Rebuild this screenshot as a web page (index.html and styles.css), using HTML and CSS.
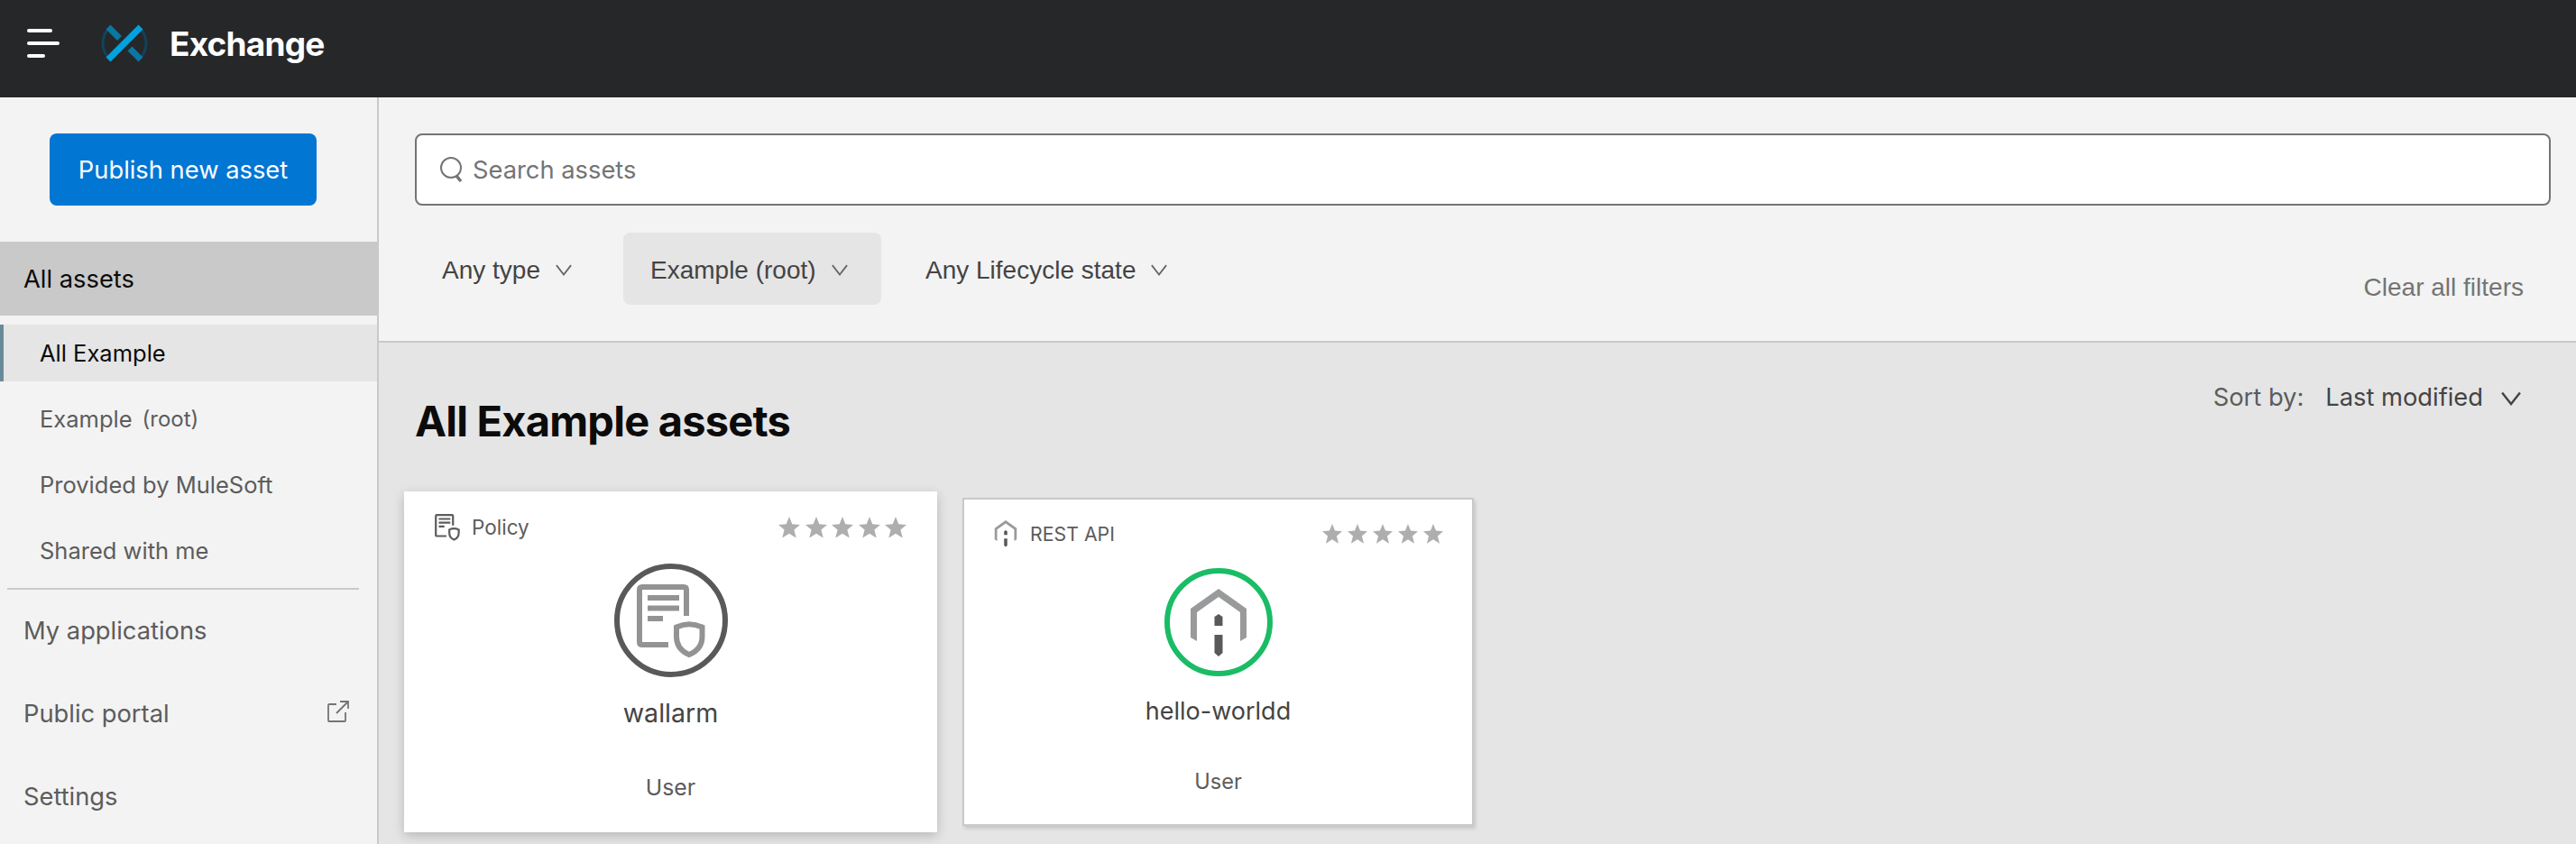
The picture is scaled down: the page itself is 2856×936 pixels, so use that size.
FILE: index.html
```html
<!DOCTYPE html>
<html lang="en">
<head>
<meta charset="utf-8">
<title>Exchange</title>
<link rel="stylesheet" href="styles.css">
</head>
<body>
<svg class="defs" aria-hidden="true">
  <symbol id="chevron" viewBox="0 0 20 14"><path d="M1 1 10 12.5 19 1"/></symbol>
  <symbol id="star" viewBox="0 0 24 24"><path d="M12 0 15.300 8.300 24 8.900 17.400 14.600 19.700 23.600 12 18.800 4.300 23.600 6.600 14.600 0 8.900 8.700 8.300Z"/></symbol>
  <symbol id="policy" viewBox="0 0 76 82"><g fill="none" stroke="currentColor" stroke-width="6"><path d="M35 67H6Q3 67 3 64V6Q3 3 6 3H52Q55 3 55 6V35"/><path d="M12 15H47M12 26.5H47M12 38H29"/><path d="M44 47.500Q58 41 72.500 47.500V58Q72.500 72 58 78Q44 72 44 58Z"/></g></symbol>
  <symbol id="rest" viewBox="0 0 62 76"><path fill="#999a9b" d="M31 0 62 22V54L55 58V26L31 9 7 26V58L0 54V22Z"/><path fill="#58595b" d="M31 28 35.500 31V41H26.500V31ZM26.500 51H35.500V71L31 75 26.500 71Z"/></symbol>
</svg>
<header class="topbar">
  <svg class="menu" viewBox="0 0 36 32"><path d="M2 2H26M2 16H34M2 30H18"/></svg>
  <svg class="logo" viewBox="0 0 52 42"><path d="M7.300 6A24 24 0 0 0 7.300 36M44.700 6A24 24 0 0 1 44.700 36" fill="none" stroke="#12435a" stroke-width="3"/><path d="M8 3 20.500 15.500M32 27 44 39" stroke="#0a76a2" stroke-width="7"/><path d="M8 39 44 3" stroke="#00a2df" stroke-width="7"/></svg>
  <span class="brand">Exchange</span>
</header>
<div class="shell">
  <aside class="side">
    <button class="publish">Publish new asset</button>
    <a class="nav current">All assets</a>
    <div class="sub">
      <a class="subnav selected">All Example</a>
      <a class="subnav"><span>Example</span> <small>(root)</small></a>
      <a class="subnav">Provided by MuleSoft</a>
      <a class="subnav">Shared with me</a>
    </div>
    <a class="nav">My applications</a>
    <a class="nav">Public portal <svg class="external" viewBox="0 0 24 24"><path d="M10 4H2Q1 4 1 5V22Q1 23 2 23H19Q20 23 20 22V13M14 1H23V9M23 1 10 14"/></svg></a>
    <a class="nav">Settings</a>
  </aside>
  <main class="main">
    <section class="filters">
      <div class="search"><svg viewBox="0 0 26 28"><circle cx="12" cy="12" r="11"/><path d="M18 21 23 27" stroke-width="3.500"/></svg><span>Search assets</span></div>
      <div class="filter-row">
        <button class="filter f1"><span>Any type</span><svg><use href="#chevron"/></svg></button>
        <button class="filter f2"><span>Example (root)</span><svg><use href="#chevron"/></svg></button>
        <button class="filter f3"><span>Any Lifecycle state</span><svg><use href="#chevron"/></svg></button>
        <a class="clear">Clear all filters</a>
      </div>
    </section>
    <section class="results">
      <div class="head">
        <h1>All Example assets</h1>
        <div class="sort"><span class="sort-label">Sort by:</span><span class="sort-value">Last modified</span><svg><use href="#chevron"/></svg></div>
      </div>
      <div class="cards">
        <article class="card raised">
          <div class="card-top"><svg class="kind"><use href="#policy"/></svg><span class="type">Policy</span><span class="stars"><svg><use href="#star"/></svg><svg><use href="#star"/></svg><svg><use href="#star"/></svg><svg><use href="#star"/></svg><svg><use href="#star"/></svg></span></div>
          <div class="badge gray"><svg class="big-policy"><use href="#policy"/></svg></div>
          <div class="name">wallarm</div>
          <div class="owner">User</div>
        </article>
        <article class="card">
          <div class="card-top"><svg class="kind"><use href="#rest"/></svg><span class="type">REST API</span><span class="stars"><svg><use href="#star"/></svg><svg><use href="#star"/></svg><svg><use href="#star"/></svg><svg><use href="#star"/></svg><svg><use href="#star"/></svg></span></div>
          <div class="badge green"><svg class="big-rest"><use href="#rest"/></svg></div>
          <div class="name">hello-worldd</div>
          <div class="owner">User</div>
        </article>
      </div>
    </section>
  </main>
</div>
</body>
</html>
```
FILE: styles.css
```css
* { box-sizing: border-box; }
body { margin: 0; height: 936px; overflow: hidden; display: flex; flex-direction: column; background: #f3f3f3; font: 27.3px/36px Inter, "Liberation Sans", sans-serif; color: #5c5c5c; }
button { border: 0; background: none; font: inherit; color: inherit; margin: 0; }
svg { display: block; flex: none; }
.defs { width: 0; height: 0; position: absolute; }
.topbar { height: 108px; flex: none; background: #262729; display: flex; align-items: flex-start; padding-left: 30px; }
.menu { width: 36px; height: 32px; margin-top: 32px; stroke: #fff; stroke-width: 4; stroke-linecap: round; }
.logo { width: 52px; height: 42px; margin: 27px 0 0 46px; }
.brand { margin: 27px 0 0 24px; color: #fff; font-weight: 700; font-size: 37px; line-height: 44px; letter-spacing: -.8px; }
.shell { flex: 1; min-height: 0; display: flex; }
.side { width: 420px; flex: none; border-right: 2px solid #c9c9c9; display: flex; flex-direction: column; padding-top: 40px; }
.publish { width: 296px; height: 80px; flex: none; margin: 0 0 40px 55px; background: #0176d3; color: #fff; border-radius: 8px; padding: 1px 0 0; }
.nav { height: 92px; flex: none; padding: 0 31px 1px 26px; display: flex; align-items: center; justify-content: space-between; }
.nav.current { height: 82px; margin-right: -2px; padding: 1px 31px 0 26px; background: #c9c9c9; color: #0b0b0b; }
.sub { padding: 10px 0 0; display: flex; flex-direction: column; gap: 10px; font-size: 25.5px; }
.sub::after { content: ""; height: 2px; background: #c9c9c9; margin: 0 20px 0 8px; }
.subnav { height: 63px; padding: 1px 0 0 44px; display: flex; align-items: center; gap: 11px; }
.subnav small { font-size: 24px; }
.selected { background: #e5e5e5; border-left: 4px solid #6b8a99; padding-left: 40px; color: #0b0b0b; }
.external { width: 24px; height: 24px; margin-top: -6px; fill: none; stroke: #747474; stroke-width: 1.8; }
.main { flex: 1; display: flex; flex-direction: column; min-width: 0; }
.filters { height: 272px; flex: none; border-bottom: 2px solid #c9c9c9; padding: 40px 28px 0 40px; }
.search { height: 80px; border: 2px solid #747474; border-radius: 8px; background: #fff; display: flex; align-items: center; gap: 10px; padding-left: 26px; color: #747474; }
.search svg { width: 26px; height: 28px; fill: none; stroke: #747474; stroke-width: 2; }
.search span { padding-top: 1px; }
.filter-row { display: flex; align-items: flex-start; margin-top: 30px; font: 28px/36px "Liberation Sans", Arial, sans-serif; }
.filter { height: 80px; border-radius: 8px; display: flex; align-items: center; padding: 2px 0 0 30px; color: #444; }
.filter span { padding-top: 1px; }
.filter svg { width: 18px; height: 13px; margin-left: 17px; fill: none; stroke: #666; stroke-width: 2; }
.f1 { width: 231px; }
.f2 { width: 286px; background: #e5e5e5; }
.f3 { padding-left: 49px; }
.clear { margin: 43px 30px 0 auto; color: #747474; }
.results { flex: 1; background: #e5e5e5; padding: 42px 60px 0 26px; }
.head { display: flex; justify-content: space-between; height: 123px; }
h1 { margin: 17px 0 0 14px; font-size: 47px; line-height: 56px; font-weight: 700; letter-spacing: -.78px; color: #0b0b0b; }
.sort { display: flex; align-items: center; height: 38px; }
.sort-value { color: #444; margin-left: 24px; }
.sort svg { width: 22px; height: 16px; margin: 2px 1px 0 20px; fill: none; stroke: #444; stroke-width: 2.2; }
.cards { display: flex; align-items: flex-start; gap: 28px; }
.card { width: 567px; height: 364px; flex: none; margin-top: 7px; padding: 23px 32px 0 32px; background: #fff; border: 2px solid #c9c9c9; box-shadow: 2px 3px 4px #0002; display: flex; flex-direction: column; align-items: center; font-size: 21.3px; }
.card.raised { width: 591px; height: 378px; margin-top: 0; padding: 25px 34px 0 34px; border: 0; box-shadow: 0 4px 12px #0003; margin-left: 2px; font-size: 22.5px; }
.card-top { align-self: stretch; display: flex; height: 30px; align-items: center; }
.kind { width: 28px; height: 30px; }
.type { margin-left: 13px; }
.stars { margin-left: auto; display: flex; gap: 6px; }
.stars svg { width: 22px; height: 22px; fill: #aeaeae; }
.raised .stars { gap: 5.5px; }
.raised .stars svg { width: 24px; height: 24px; }
.badge { width: 120px; height: 120px; border: 6px solid #1abc65; border-radius: 50%; margin-top: 23px; display: flex; flex: none; padding: 17px 0 0 23px; }
.badge.gray { width: 126px; height: 126px; border-color: #58595b; margin-top: 25px; padding: 17px 0 0 19px; }
.big-policy { width: 76px; height: 82px; color: #939393; }
.big-rest { width: 62px; height: 76px; }
.name { margin-top: 21px; font-size: 27px; color: #444; }
.owner { margin-top: 42px; font-size: 23.6px; }
.raised .name { font-size: 28.6px; margin-top: 22px; }
.raised .owner { margin-top: 46px; font-size: 24.8px; }
```
